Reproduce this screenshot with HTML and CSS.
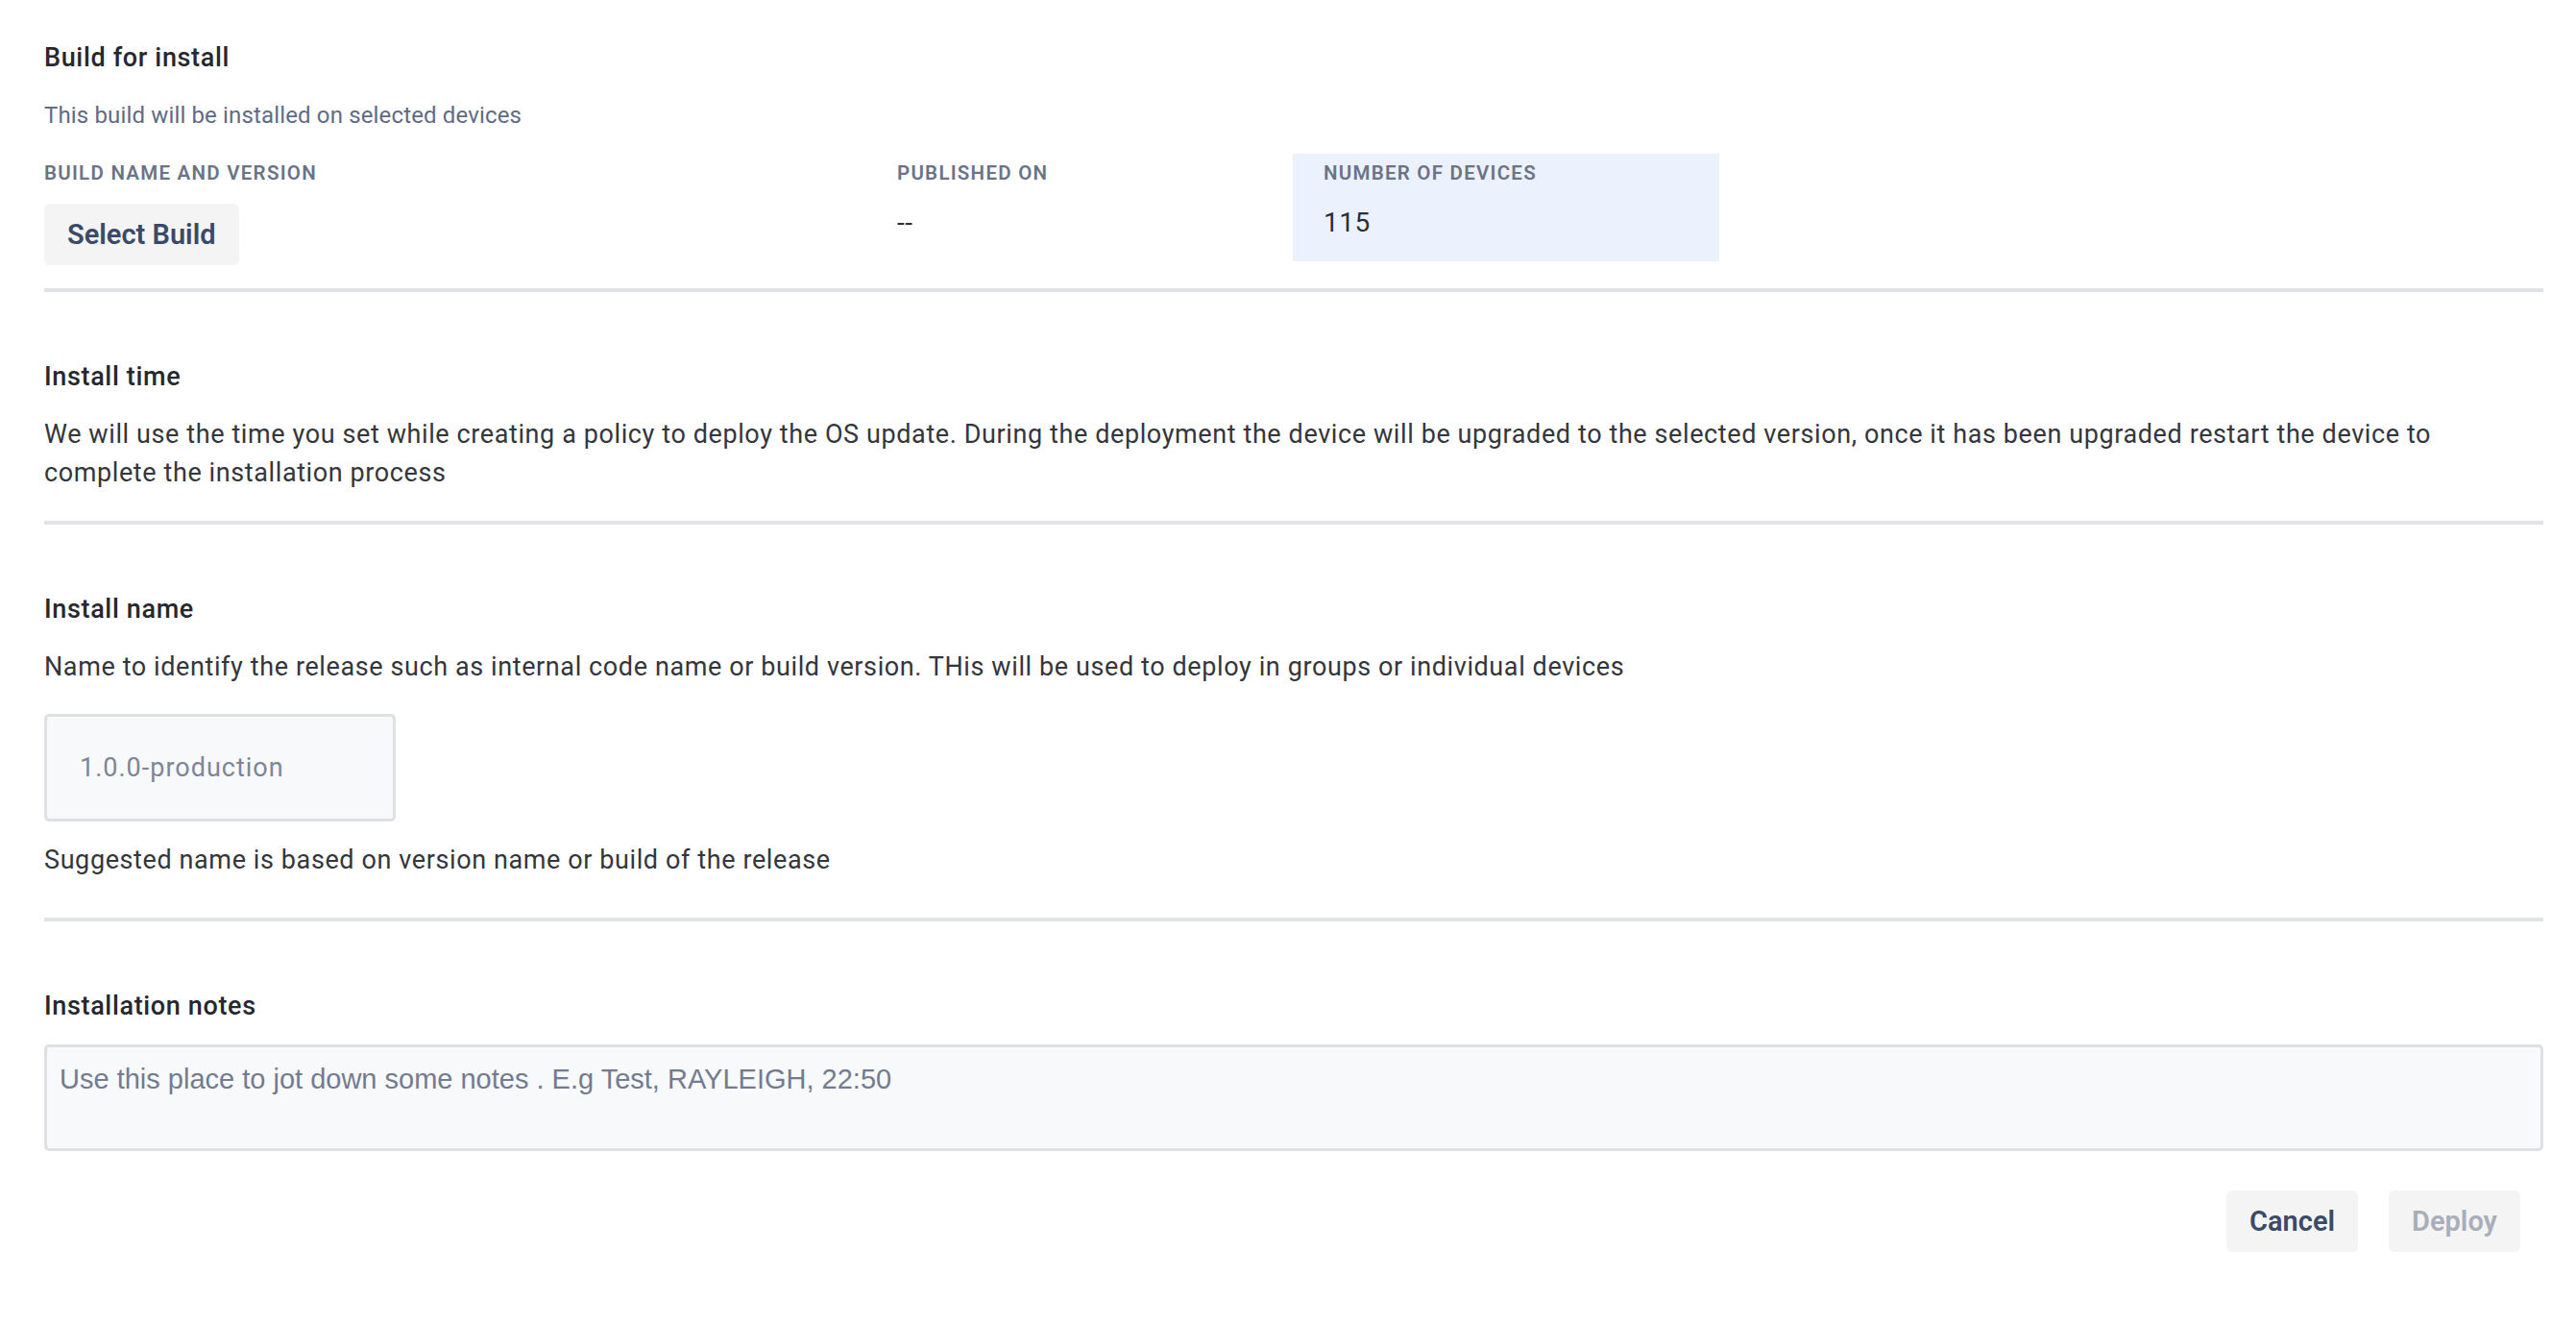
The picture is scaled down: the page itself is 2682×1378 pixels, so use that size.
FILE: index.html
```html
<!DOCTYPE html>
<html lang="en">
<head>
<meta charset="utf-8">
<title>Deploy build</title>
<link rel="stylesheet" href="styles.css">
</head>
<body>
<main class="page">
  <section class="section section-first">
    <h2 class="title">Build for install</h2>
    <p class="subtitle">This build will be installed on selected devices</p>
    <div class="meta">
      <div class="meta-cell meta-build">
        <div class="meta-label">BUILD NAME AND VERSION</div>
        <button class="btn">Select Build</button>
      </div>
      <div class="meta-cell">
        <div class="meta-label">PUBLISHED ON</div>
        <div class="meta-value">--</div>
      </div>
      <div class="meta-cell meta-highlight">
        <div class="meta-label">NUMBER OF DEVICES</div>
        <div class="meta-value">115</div>
      </div>
    </div>
  </section>

  <section class="section section-time">
    <h2 class="title">Install time</h2>
    <p class="body-text">We will use the time you set while creating a policy to deploy the OS update. During the deployment the device will be upgraded to the selected version, once it has been upgraded restart the device to complete the installation process</p>
  </section>

  <section class="section section-name">
    <h2 class="title">Install name</h2>
    <p class="body-text">Name to identify the release such as internal code name or build version. THis will be used to deploy in groups or individual devices</p>
    <input class="text-input" type="text" placeholder="1.0.0-production">
    <p class="body-text helper">Suggested name is based on version name or build of the release</p>
  </section>

  <section class="section section-notes">
    <h2 class="title">Installation notes</h2>
    <textarea class="notes" placeholder="Use this place to jot down some notes . E.g Test, RAYLEIGH, 22:50"></textarea>
    <div class="actions">
      <button class="btn">Cancel</button>
      <button class="btn btn-disabled" disabled>Deploy</button>
    </div>
  </section>
</main>
</body>
</html>
```

FILE: styles.css
```css
* {
  box-sizing: border-box;
}

html, body {
  margin: 0;
  padding: 0;
  background: #ffffff;
}

body {
  font-family: Roboto, "Noto Sans", "Liberation Sans", sans-serif;
  color: #34363c;
}

.page {
  padding: 0 34px 0 46px;
}

.section {
  display: flex;
  flex-direction: column;
  align-items: flex-start;
  padding-top: 68px;
  padding-bottom: 30px;
  border-bottom: 4px solid #e1e3e6;
}

.section-first {
  padding-top: 40px;
  padding-bottom: 24px;
}

.section-name {
  padding-bottom: 40px;
}

.section-notes {
  border-bottom: none;
  align-items: stretch;
}

.title {
  margin: 0;
  font-size: 27px;
  line-height: 40px;
  font-weight: 500;
  letter-spacing: 0.65px;
  color: #26282d;
}

.subtitle {
  margin: 22px 0 0;
  font-size: 24px;
  line-height: 36px;
  letter-spacing: 0.15px;
  color: #5f6b85;
}

.body-text {
  max-width: 2560px;
  margin: 20px 0 0;
  font-size: 27px;
  line-height: 40px;
  letter-spacing: 0.6px;
  color: #34363c;
}

.meta {
  margin-top: 22px;
  display: grid;
  grid-template-columns: 888px 412px 444px;
  align-items: start;
}

.meta-cell {
  display: flex;
  flex-direction: column;
  align-items: flex-start;
  gap: 20px;
  padding: 8px 0 20px;
}

.meta-build {
  padding-bottom: 0;
}

.meta-highlight {
  background: #ebf2fe;
  padding-left: 32px;
  padding-right: 32px;
}

.meta-label {
  font-size: 20.5px;
  line-height: 24px;
  font-weight: 600;
  letter-spacing: 1.25px;
  color: #6b7386;
}

.meta-value {
  font-size: 28px;
  line-height: 40px;
  letter-spacing: 0.5px;
  color: #2c2e33;
}

.btn {
  height: 64px;
  padding: 0 24px;
  border: none;
  border-radius: 6px;
  background: #f4f4f5;
  font-family: Roboto, "Noto Sans", "Liberation Sans", sans-serif;
  font-size: 29px;
  font-weight: 600;
  color: #3b4a68;
}

.btn-disabled {
  color: #a9aeb9;
}

.text-input {
  margin-top: 29px;
  width: 366px;
  height: 112px;
  padding: 0 34px;
  border: 3px solid #dfe0e4;
  border-radius: 5px;
  background: #f8f9fb;
  font-family: Roboto, "Noto Sans", "Liberation Sans", sans-serif;
  font-size: 27px;
  letter-spacing: 1px;
  color: #34363c;
}

.text-input::placeholder {
  color: #7d8599;
}

.helper {
  margin-top: 20px;
}

.notes {
  margin-top: 20px;
  height: 111px;
  padding: 17px 13px;
  border: 3px solid #dfe0e4;
  border-radius: 5px;
  background: #f8f9fb;
  font-family: "Liberation Sans", Arial, sans-serif;
  font-size: 29px;
  resize: none;
  color: #34363c;
}

.notes::placeholder {
  color: #737b90;
}

.actions {
  margin-top: 41px;
  padding-right: 24px;
  display: flex;
  justify-content: flex-end;
  gap: 32px;
}
```
